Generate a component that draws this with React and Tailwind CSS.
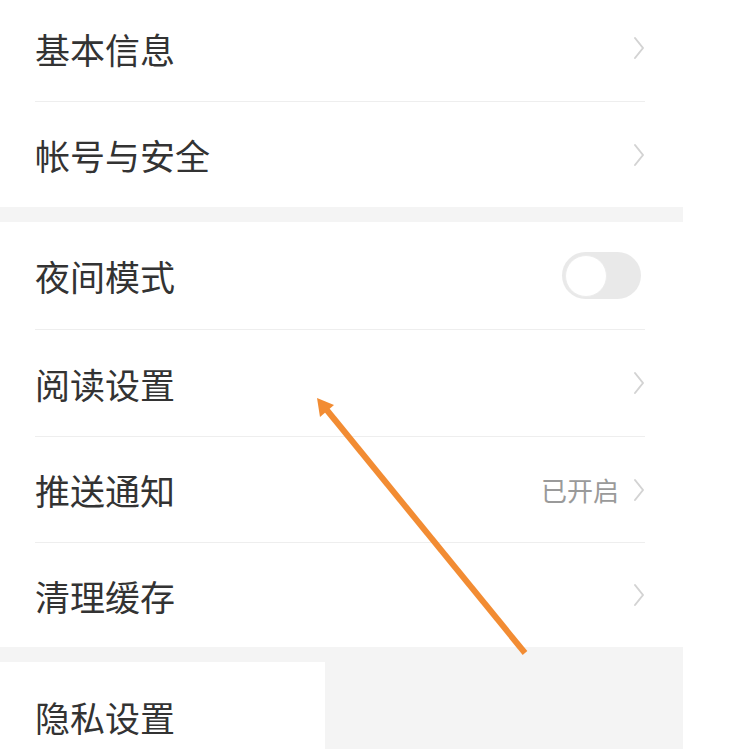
import React from "react";

function Chevron() {
  return (
    <svg width="12" height="24" viewBox="0 0 12 24" className="shrink-0">
      <path d="M2 2 L10 12 L2 22" fill="none" stroke="#d3d3d3" strokeWidth="2" strokeLinecap="round" strokeLinejoin="round" />
    </svg>
  );
}

function Row({ label, h, divider, pb, right }) {
  return (
    <div className={`${h} pl-[35px] pr-[38px] bg-white`}>
      <div
        className={`h-full flex items-center justify-between ${pb || ""} ${
          divider ? "border-b border-[#eeeeee]" : ""
        }`}
      >
        <span className="text-[35px] leading-none text-[#333333]">{label}</span>
        {right}
      </div>
    </div>
  );
}

function Toggle() {
  return (
    <div className="w-[79px] h-[47px] rounded-full bg-[#e9e9e9] flex items-center pl-[3px] mr-[4px]">
      <div className="w-[42px] h-[42px] rounded-full bg-white border border-[#ececec]" />
    </div>
  );
}

export default function App() {
  return (
    <div className="relative w-[729px] h-[749px] bg-white overflow-hidden font-['Noto_Sans_CJK_SC','Noto_Sans',sans-serif]">
      <div className="w-[683px] flex flex-col">
        <Row label="基本信息" h="h-[102px]" divider pb="pb-[5px]" right={<Chevron />} />
        <Row label="帐号与安全" h="h-[105px]" right={<Chevron />} />
        <div className="h-[15px] bg-[#f4f4f4]" />
        <Row label="夜间模式" h="h-[108px]" divider right={<Toggle />} />
        <Row label="阅读设置" h="h-[107px]" divider right={<Chevron />} />
        <Row
          label="推送通知"
          h="h-[106px]"
          divider
          right={
            <div className="flex items-center gap-[14px]">
              <span className="text-[26px] leading-none text-[#9a9a9a]">已开启</span>
              <Chevron />
            </div>
          }
        />
        <Row label="清理缓存" h="h-[104px]" right={<Chevron />} />
        <div className="h-[15px] bg-[#f4f4f4]" />
        <div className="flex h-[87px]">
          <div className="w-[325px] bg-white pl-[35px] pt-[22px] flex items-center">
            <span className="text-[35px] leading-none text-[#333333]">隐私设置</span>
          </div>
          <div className="flex-1 bg-[#f4f4f4]" />
        </div>
      </div>
      <svg className="absolute inset-0 pointer-events-none" width="729" height="749" viewBox="0 0 729 749">
        <line x1="525" y1="653" x2="326" y2="409" stroke="#f28c33" strokeWidth="6" />
        <polygon points="317,398 334,405 320,417" fill="#f28c33" />
      </svg>
    </div>
  );
}
